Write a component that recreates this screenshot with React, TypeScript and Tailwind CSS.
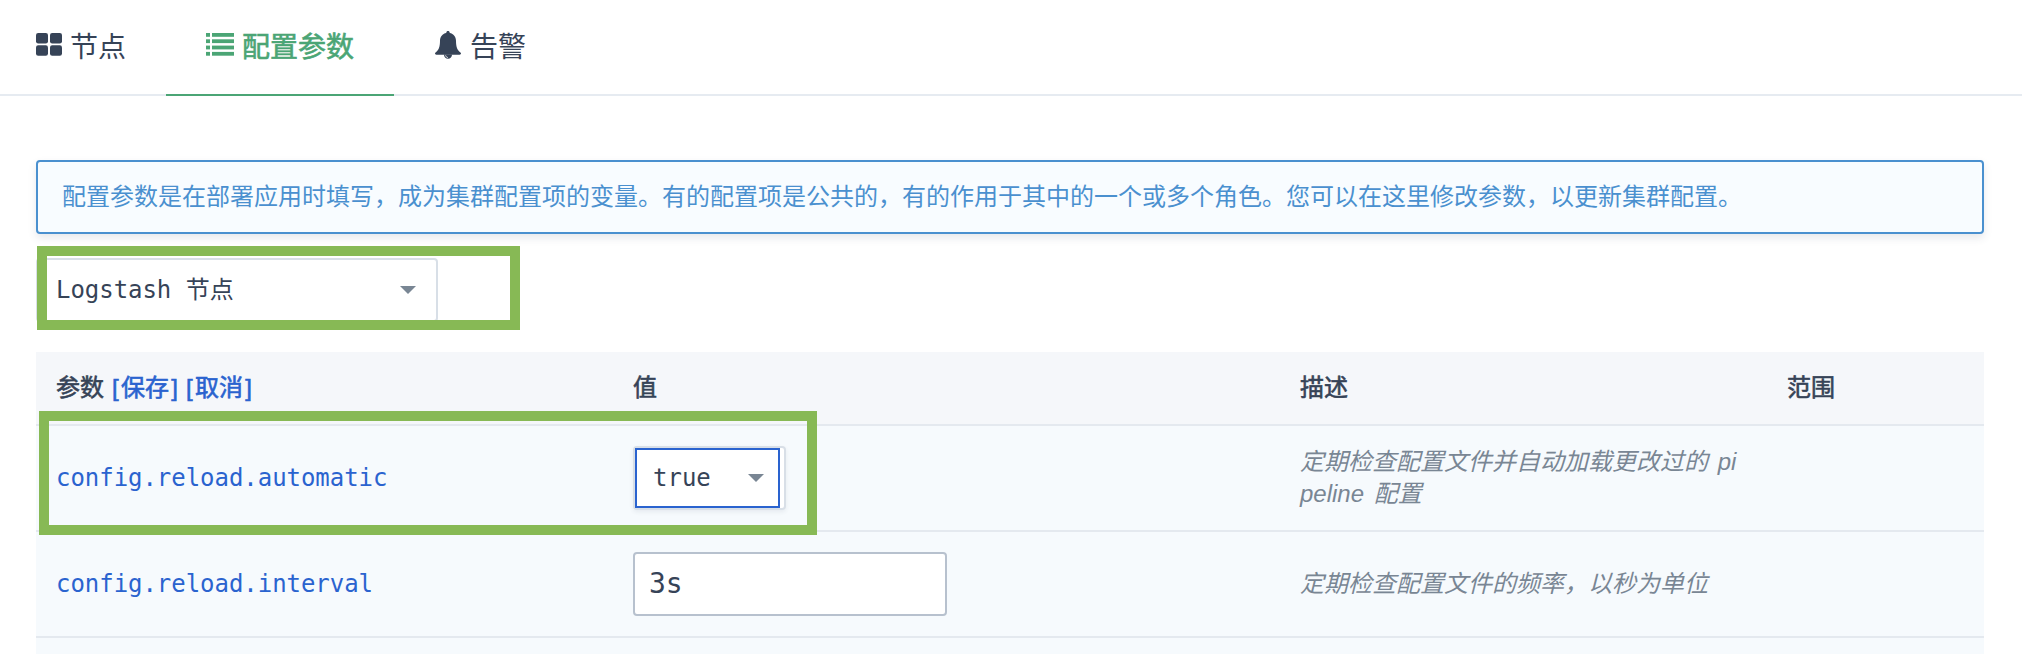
import type { ReactNode } from 'react';

const sans = "font-['Liberation_Sans','Noto_Sans_CJK_SC',sans-serif]";
const mono = "font-['DejaVu_Sans_Mono','Noto_Sans_CJK_SC',monospace]";
const medium = '[-webkit-text-stroke:0.6px_currentColor]';

function GridIcon() {
  return (
    <svg className="h-[23px] w-[26px]" viewBox="0 0 26 23" fill="currentColor">
      <rect x="0" y="0" width="12" height="10.5" rx="2.2" />
      <rect x="14" y="0" width="12" height="10.5" rx="2.2" />
      <rect x="0" y="12.2" width="12" height="10.5" rx="2.2" />
      <rect x="14" y="12.2" width="12" height="10.5" rx="2.2" />
    </svg>
  );
}

function ListIcon() {
  return (
    <svg className="h-[23px] w-7" viewBox="0 0 28 23" fill="currentColor">
      {[0, 6.3, 12.6, 18.9].map((y) => (
        <g key={y}>
          <rect x="0" y={y} width="4" height="3.8" />
          <rect x="6" y={y} width="22" height="3.8" />
        </g>
      ))}
    </svg>
  );
}

function BellIcon() {
  return (
    <svg className="h-7 w-[26px]" viewBox="0 0 26 28" fill="currentColor">
      <path d="M13 0c1 0 1.7.7 1.7 1.6v.5c3.900.700 6.300 3.800 6.300 7.700 0 6.700 1.500 9.600 4.200 11.400.600.400.800.900.800 1.400 0 .700-.600 1.200-1.400 1.200H1.400C.6 23.800 0 23.300 0 22.600c0-.500.200-1 .800-1.400C3.500 19.400 5 16.500 5 9.800c0-3.900 2.400-7 6.300-7.700v-.5C11.300.7 12 0 13 0z" />
      <path d="M9 23.500h8c0 2.500-1.600 4.300-4 4.300s-4-1.800-4-4.300z" />
      <path d="M10.600 24.300c.2 1.300 1 2.100 2.300 2.200" fill="none" stroke="#fff" strokeWidth="0.8" />
    </svg>
  );
}

function Caret() {
  return (
    <svg className="h-2 w-4" viewBox="0 0 16 8" fill="#798694">
      <path d="M0 0h16L8 8z" />
    </svg>
  );
}

function HeaderLink({ children }: { children: string }) {
  return (
    <a className="ml-2 flex text-[#2a63cf]">
      <span className="w-[9px]">[</span>
      {children}
      <span className="w-[9px] text-right">]</span>
    </a>
  );
}

function Row({ name, value, desc }: { name: string; value: ReactNode; desc: ReactNode }) {
  return (
    <div className="grid h-[106px] grid-cols-[577px_667px_487px_1fr] items-center border-b-2 border-[#e4e9ef] bg-[#f6fafd]">
      <div className={`pl-5 text-[24px] tracking-[-0.04px] text-[#2a63cf] ${mono}`}>{name}</div>
      <div className="pl-5">{value}</div>
      <div className="pb-px pl-5 text-[24px] leading-8 text-[#798694] italic [word-spacing:3px]">{desc}</div>
      <div />
    </div>
  );
}

export default function App() {
  return (
    <div className={`relative h-[654px] w-full overflow-hidden bg-white text-[#364357] ${sans}`}>
      <nav className="flex h-24 border-b-2 border-[#e6ebf1] text-[28px]">
        <div className="flex h-24 w-[166px] items-center pb-px pl-9">
          <span className="pb-[7px]"><GridIcon /></span>
          <span className="ml-2">节点</span>
        </div>
        <div className="flex h-24 w-[228px] items-center border-b-2 border-[#4ba575] pt-px pl-10 text-[#4ba575]">
          <span className="pb-[7px]"><ListIcon /></span>
          <span className={`ml-2 ${medium}`}>配置参数</span>
        </div>
        <div className="flex h-24 items-center pb-px pl-[41px]">
          <span className="pb-[5px]"><BellIcon /></span>
          <span className="ml-[9px]">告警</span>
        </div>
      </nav>

      <main className="pr-[38px] pl-9">
        <div className="mt-16 flex h-[74px] items-center rounded-[4px] border-2 border-[#4a90cf] bg-[#f8fcff] pl-6 text-[24px] text-[#4a90cf] shadow-[0_4px_8px_rgba(54,67,87,0.12)]">
          配置参数是在部署应用时填写，成为集群配置项的变量。有的配置项是公共的，有的作用于其中的一个或多个角色。您可以在这里修改参数，以更新集群配置。
        </div>

        <div className={`mt-6 flex h-16 w-[402px] items-center justify-between rounded-[4px] border-2 border-[#d8dfe7] pr-5 pl-[18px] text-[24px] tracking-[-0.04px] ${mono}`}>
          <span className="whitespace-pre">Logstash 节点</span>
          <Caret />
        </div>

        <section className="mt-[30px] bg-[#f6fafd]">
          <div className={`grid h-[74px] grid-cols-[577px_667px_487px_1fr] items-center border-b-2 border-[#e4e9ef] bg-[#f5f7fa] text-[24px] ${medium}`}>
            <div className="flex pl-5">
              <span>参数</span>
              <HeaderLink>保存</HeaderLink>
              <HeaderLink>取消</HeaderLink>
            </div>
            <div className="pl-5">值</div>
            <div className="pl-5">描述</div>
            <div className="pl-5">范围</div>
          </div>
          <Row
            name="config.reload.automatic"
            value={
              <div className="flex h-16 w-[153px] items-center rounded-[4px] border-2 border-[#d8dfe7] bg-white shadow-[0_2px_4px_rgba(54,67,87,0.08)]">
                <div className={`flex h-[60px] w-[145px] items-center justify-between border-2 border-[#2a63cf] pr-3.5 pl-4 text-[24px] ${mono}`}>
                  <span>true</span>
                  <Caret />
                </div>
              </div>
            }
            desc={<>定期检查配置文件并自动加载更改过的 pi<br />peline 配置</>}
          />
          <Row
            name="config.reload.interval"
            value={
              <div className={`flex h-16 w-[314px] items-center rounded-[4px] border-2 border-[#b7c1ce] bg-white pl-3.5 text-[28px] ${mono}`}>
                3s
              </div>
            }
            desc="定期检查配置文件的频率，以秒为单位"
          />
          <div className="h-4" />
        </section>
      </main>

      <div className="absolute top-[246px] left-[37px] h-[84px] w-[483px] border-10 border-[#87b955]" />
      <div className="absolute top-[411px] left-[39px] h-[124px] w-[778px] border-10 border-[#87b955]" />
    </div>
  );
}
